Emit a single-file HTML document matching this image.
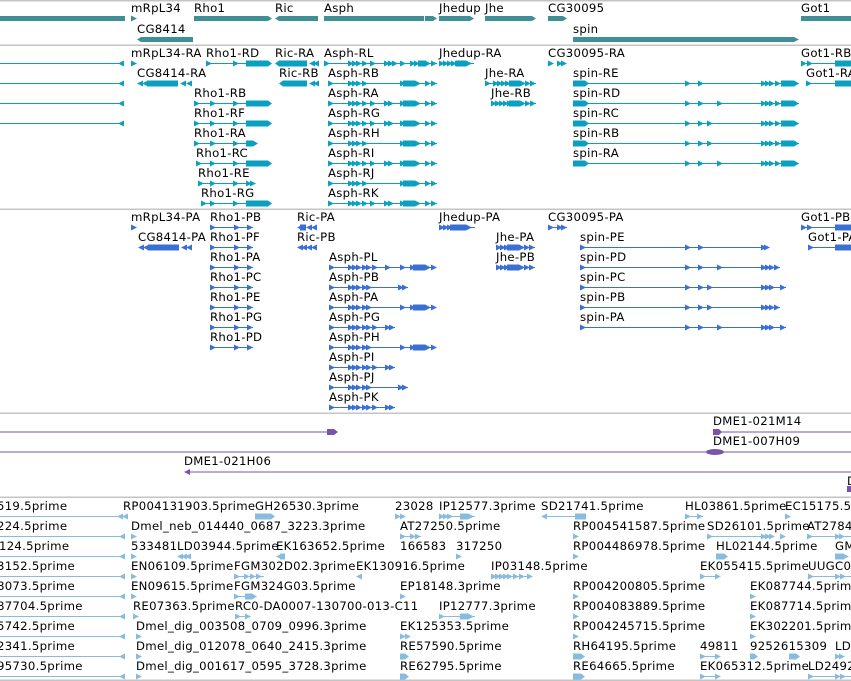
<!DOCTYPE html>
<html><head><meta charset="utf-8"><style>
html,body{margin:0;padding:0;background:#fff;width:851px;height:681px;overflow:hidden;position:relative}
.t{position:absolute;font-family:"DejaVu Sans","Liberation Sans",sans-serif;font-size:11.7px;line-height:14px;color:#000;white-space:nowrap;letter-spacing:0.28px}
svg{position:absolute;left:0;top:0}
</style></head><body>
<svg width="851" height="681" viewBox="0 0 851 681">
<defs>
<path id="r" d="M0,-3L6,0L0,3Z"/>
<path id="l" d="M6,-3L0,0L6,3Z"/>
</defs>
<g fill="#c4c4c4">
<rect x="0" y="0" width="851" height="1.5"/>
<rect x="0" y="44.5" width="851" height="1.5"/>
<rect x="0" y="208.5" width="851" height="1.5"/>
<rect x="0" y="412.5" width="851" height="1.5"/>
<rect x="0" y="496.5" width="851" height="1.5"/>
<rect x="0" y="679.5" width="851" height="1.5"/>
</g>
<g fill="#418f96">
<rect x="0" y="16" width="125" height="5"/>
<use href="#r" x="131" y="18.5"/>
<path d="M194,16H268L272,18.5L268,21H194Z"/>
<path d="M279,16H318V21H279L275,18.5Z"/>
<rect x="324" y="16" width="100" height="5"/>
<path d="M425,16H433L437,18.5L433,21H425Z"/>
<path d="M439,16H470L474,18.5L470,21H439Z"/>
<path d="M485,16H532L536,18.5L532,21H485Z"/>
<path d="M548,16H563L567,18.5L563,21H548Z"/>
<rect x="801" y="16" width="50" height="5"/>
<path d="M141,37H193V42H141L137,39.5Z"/>
<path d="M573,37H794L799,39.5L794,42H573Z"/>
</g>
<g fill="#0aa0c0" stroke="none">
<g transform="translate(0,63.5)">
<rect x="0" y="-0.5" width="120" height="1"/><use href="#l" x="118"/>
<use href="#r" x="131"/>
<rect x="206" y="-0.5" width="40" height="1"/><use href="#r" x="206"/><use href="#r" x="233"/><path d="M246,-3H268L272,0L268,3H246Z"/>
<path d="M279,-3H307V3H279L275,0Z"/><use href="#l" x="309"/><use href="#l" x="313"/>
<rect x="324" y="-0.5" width="113" height="1"/><use href="#r" x="324"/><use href="#r" x="348"/><use href="#r" x="352"/><use href="#r" x="356"/><use href="#r" x="362"/><use href="#r" x="370"/><use href="#r" x="384"/><use href="#r" x="388"/><use href="#r" x="392"/><use href="#r" x="400"/><use href="#r" x="410"/><use href="#r" x="414"/><rect x="418" y="-3" width="8" height="6"/><use href="#r" x="425"/><use href="#r" x="431"/>
<rect x="439" y="-0.5" width="35" height="1"/><use href="#r" x="439"/><use href="#r" x="443"/><use href="#r" x="447"/><use href="#r" x="451"/><use href="#r" x="455"/><rect x="456" y="-3" width="10" height="6"/><use href="#r" x="466"/>
<use href="#r" x="548"/><use href="#r" x="557"/><use href="#r" x="561"/>
<rect x="801" y="-0.5" width="50" height="1"/><use href="#r" x="801"/><use href="#r" x="807"/><rect x="835" y="-3" width="16" height="6"/>
</g>
<g transform="translate(0,83.5)">
<rect x="0" y="-0.5" width="120" height="1"/><use href="#l" x="118"/>
<use href="#l" x="137"/><use href="#l" x="142"/><path d="M147,-3H178V3H147Z"/><use href="#l" x="180"/><use href="#l" x="186"/>
<path d="M283,-3H307V3H283L279,0Z"/><use href="#l" x="309"/><use href="#l" x="313"/>
<rect x="328" y="-0.5" width="109" height="1"/><use href="#r" x="328"/><use href="#r" x="348"/><use href="#r" x="352"/><use href="#r" x="356"/><use href="#r" x="362"/><use href="#r" x="400"/><rect x="403" y="-3" width="12" height="6"/><use href="#r" x="415"/><use href="#r" x="425"/><use href="#r" x="431"/>
<rect x="485" y="-0.5" width="51" height="1"/><use href="#r" x="485"/><use href="#r" x="493"/><use href="#r" x="497"/><use href="#r" x="501"/><use href="#r" x="505"/><rect x="509" y="-3" width="11" height="6"/><use href="#r" x="520"/><use href="#r" x="525"/><use href="#r" x="530"/>
<rect x="573" y="-0.5" width="226" height="1"/><path d="M573,-3H585L589,0L585,3H573Z"/><use href="#r" x="685"/><use href="#r" x="698"/><use href="#r" x="761"/><use href="#r" x="765"/><use href="#r" x="769"/><use href="#r" x="775"/><path d="M781,-3H794L799,0L794,3H781Z"/>
<rect x="806" y="-0.5" width="45" height="1"/><use href="#r" x="806"/><rect x="835" y="-3" width="16" height="6"/>
</g>
<g transform="translate(0,103.5)">
<rect x="0" y="-0.5" width="120" height="1"/><use href="#l" x="118"/>
<rect x="194" y="-0.5" width="52" height="1"/><use href="#r" x="194"/><use href="#r" x="210"/><use href="#r" x="233"/><path d="M246,-3H268L272,0L268,3H246Z"/>
<rect x="328" y="-0.5" width="109" height="1"/><use href="#r" x="328"/><use href="#r" x="348"/><use href="#r" x="352"/><use href="#r" x="356"/><use href="#r" x="362"/><use href="#r" x="370"/><use href="#r" x="384"/><use href="#r" x="388"/><use href="#r" x="400"/><rect x="403" y="-3" width="12" height="6"/><use href="#r" x="415"/><use href="#r" x="425"/><use href="#r" x="431"/>
<use href="#r" x="491"/><use href="#r" x="495"/><use href="#r" x="499"/><use href="#r" x="503"/><use href="#r" x="507"/><rect x="509" y="-3" width="11" height="6"/><use href="#r" x="520"/><use href="#r" x="525"/><use href="#r" x="530"/><rect x="491" y="-0.5" width="45" height="1"/>
<rect x="573" y="-0.5" width="226" height="1"/><path d="M573,-3H585L589,0L585,3H573Z"/><use href="#r" x="685"/><use href="#r" x="698"/><use href="#r" x="717"/><use href="#r" x="761"/><use href="#r" x="765"/><use href="#r" x="769"/><use href="#r" x="775"/><path d="M781,-3H794L799,0L794,3H781Z"/>
</g>
<g transform="translate(0,123.5)">
<rect x="0" y="-0.5" width="120" height="1"/><use href="#l" x="118"/>
<rect x="194" y="-0.5" width="52" height="1"/><use href="#r" x="194"/><use href="#r" x="210"/><use href="#r" x="233"/><path d="M246,-3H268L272,0L268,3H246Z"/>
<rect x="328" y="-0.5" width="109" height="1"/><use href="#r" x="328"/><use href="#r" x="348"/><use href="#r" x="352"/><use href="#r" x="356"/><use href="#r" x="362"/><use href="#r" x="370"/><use href="#r" x="384"/><use href="#r" x="388"/><use href="#r" x="400"/><rect x="403" y="-3" width="12" height="6"/><use href="#r" x="415"/><use href="#r" x="425"/><use href="#r" x="431"/>
<rect x="573" y="-0.5" width="226" height="1"/><path d="M573,-3H585L589,0L585,3H573Z"/><use href="#r" x="685"/><use href="#r" x="698"/><use href="#r" x="707"/><use href="#r" x="761"/><use href="#r" x="765"/><use href="#r" x="769"/><use href="#r" x="775"/><path d="M781,-3H794L799,0L794,3H781Z"/>
</g>
<g transform="translate(0,143.5)">
<rect x="194" y="-0.5" width="52" height="1"/><use href="#r" x="194"/><use href="#r" x="210"/><use href="#r" x="233"/><path d="M246,-3H253L258,0L253,3H246Z"/>
<rect x="328" y="-0.5" width="109" height="1"/><use href="#r" x="328"/><use href="#r" x="348"/><use href="#r" x="352"/><use href="#r" x="356"/><use href="#r" x="362"/><use href="#r" x="400"/><rect x="403" y="-3" width="12" height="6"/><use href="#r" x="415"/><use href="#r" x="425"/><use href="#r" x="431"/>
<rect x="573" y="-0.5" width="226" height="1"/><path d="M573,-3H585L589,0L585,3H573Z"/><use href="#r" x="685"/><use href="#r" x="698"/><use href="#r" x="707"/><use href="#r" x="761"/><use href="#r" x="765"/><use href="#r" x="769"/><use href="#r" x="775"/><path d="M781,-3H794L799,0L794,3H781Z"/>
</g>
<g transform="translate(0,163.5)">
<rect x="196" y="-0.5" width="50" height="1"/><use href="#r" x="196"/><use href="#r" x="210"/><use href="#r" x="233"/><path d="M246,-3H268L272,0L268,3H246Z"/>
<rect x="328" y="-0.5" width="109" height="1"/><use href="#r" x="328"/><use href="#r" x="348"/><use href="#r" x="352"/><use href="#r" x="356"/><use href="#r" x="362"/><use href="#r" x="370"/><use href="#r" x="384"/><use href="#r" x="388"/><use href="#r" x="400"/><rect x="403" y="-3" width="12" height="6"/><use href="#r" x="415"/><use href="#r" x="425"/><use href="#r" x="431"/>
<rect x="573" y="-0.5" width="226" height="1"/><path d="M573,-3H585L589,0L585,3H573Z"/><use href="#r" x="685"/><use href="#r" x="698"/><use href="#r" x="717"/><use href="#r" x="761"/><use href="#r" x="765"/><use href="#r" x="769"/><use href="#r" x="775"/><path d="M781,-3H794L799,0L794,3H781Z"/>
</g>
<g transform="translate(0,183.5)">
<rect x="198" y="-0.5" width="50" height="1"/><use href="#r" x="198"/><use href="#r" x="210"/><use href="#r" x="233"/><use href="#r" x="246"/><use href="#r" x="250"/>
<rect x="328" y="-0.5" width="109" height="1"/><use href="#r" x="328"/><use href="#r" x="348"/><use href="#r" x="352"/><use href="#r" x="356"/><use href="#r" x="362"/><use href="#r" x="400"/><rect x="403" y="-3" width="12" height="6"/><use href="#r" x="415"/><use href="#r" x="425"/><use href="#r" x="431"/>
</g>
<g transform="translate(0,203.5)">
<rect x="201" y="-0.5" width="45" height="1"/><use href="#r" x="201"/><use href="#r" x="210"/><use href="#r" x="233"/><path d="M246,-3H268L272,0L268,3H246Z"/>
<rect x="328" y="-0.5" width="109" height="1"/><use href="#r" x="328"/><use href="#r" x="348"/><use href="#r" x="352"/><use href="#r" x="356"/><use href="#r" x="362"/><use href="#r" x="370"/><use href="#r" x="384"/><use href="#r" x="388"/><use href="#r" x="400"/><rect x="403" y="-3" width="12" height="6"/><use href="#r" x="415"/><use href="#r" x="425"/><use href="#r" x="431"/>
</g>
</g>
<g fill="#3a6fd4">
<g transform="translate(0,227.5)">
<use href="#r" x="131"/>
<rect x="210" y="-0.5" width="43" height="1"/><use href="#r" x="210"/><use href="#r" x="234"/><use href="#r" x="247"/>
<use href="#l" x="297"/><rect x="300" y="-3" width="6" height="6"/><use href="#l" x="306"/><use href="#l" x="311"/>
<rect x="439" y="-0.5" width="36" height="1"/><use href="#r" x="439"/><use href="#r" x="443"/><use href="#r" x="447"/><rect x="450" y="-3" width="16" height="6"/><use href="#r" x="466"/>
<rect x="548" y="-0.5" width="19" height="1"/><use href="#r" x="548"/><use href="#r" x="557"/><use href="#r" x="561"/>
<rect x="801" y="-0.5" width="50" height="1"/><use href="#r" x="801"/><use href="#r" x="807"/><rect x="835" y="-3" width="16" height="6"/>
</g>
<g transform="translate(0,247.5)">
<use href="#l" x="138"/><use href="#l" x="143"/><path d="M148,-3H179V3H148Z"/><use href="#l" x="181"/><use href="#l" x="186"/>
<rect x="210" y="-0.5" width="43" height="1"/><use href="#r" x="210"/><use href="#r" x="234"/><use href="#r" x="247"/>
<use href="#l" x="297"/><use href="#l" x="301"/><use href="#l" x="306"/><use href="#l" x="311"/>
<rect x="496" y="-0.5" width="39" height="1"/><use href="#r" x="496"/><use href="#r" x="500"/><use href="#r" x="504"/><rect x="507" y="-3" width="12" height="6"/><use href="#r" x="519"/><use href="#r" x="524"/><use href="#r" x="529"/>
<rect x="580" y="-0.5" width="188" height="1"/><use href="#r" x="580"/><use href="#r" x="685"/><use href="#r" x="698"/><use href="#r" x="761"/><use href="#r" x="764"/>
<rect x="808" y="-0.5" width="43" height="1"/><use href="#r" x="808"/><rect x="835" y="-3" width="16" height="6"/>
</g>
<g transform="translate(0,267.5)">
<rect x="210" y="-0.5" width="43" height="1"/><use href="#r" x="210"/><use href="#r" x="234"/><use href="#r" x="247"/>
<rect x="329" y="-0.5" width="107" height="1"/><use href="#r" x="329"/><use href="#r" x="348"/><use href="#r" x="352"/><use href="#r" x="356"/><use href="#r" x="362"/><use href="#r" x="366"/><use href="#r" x="372"/><use href="#r" x="385"/><use href="#r" x="400"/><use href="#r" x="410"/><rect x="413" y="-3" width="12" height="6"/><use href="#r" x="425"/><use href="#r" x="431"/>
<rect x="496" y="-0.5" width="39" height="1"/><use href="#r" x="496"/><use href="#r" x="500"/><use href="#r" x="504"/><rect x="507" y="-3" width="12" height="6"/><use href="#r" x="519"/><use href="#r" x="524"/><use href="#r" x="529"/>
<rect x="580" y="-0.5" width="200" height="1"/><use href="#r" x="580"/><use href="#r" x="685"/><use href="#r" x="698"/><use href="#r" x="717"/><use href="#r" x="761"/><use href="#r" x="765"/><use href="#r" x="769"/><use href="#r" x="774"/>
</g>
<g transform="translate(0,287.5)">
<rect x="210" y="-0.5" width="43" height="1"/><use href="#r" x="210"/><use href="#r" x="234"/><use href="#r" x="247"/>
<rect x="329" y="-0.5" width="79" height="1"/><use href="#r" x="329"/><use href="#r" x="348"/><use href="#r" x="352"/><use href="#r" x="356"/><use href="#r" x="362"/><use href="#r" x="366"/><use href="#r" x="398"/><use href="#r" x="402"/>
<rect x="580" y="-0.5" width="206" height="1"/><use href="#r" x="580"/><use href="#r" x="685"/><use href="#r" x="698"/><use href="#r" x="707"/><use href="#r" x="761"/><use href="#r" x="765"/><use href="#r" x="769"/><use href="#r" x="780"/>
</g>
<g transform="translate(0,307.5)">
<rect x="210" y="-0.5" width="43" height="1"/><use href="#r" x="210"/><use href="#r" x="234"/><use href="#r" x="247"/>
<rect x="329" y="-0.5" width="107" height="1"/><use href="#r" x="329"/><use href="#r" x="348"/><use href="#r" x="352"/><use href="#r" x="356"/><use href="#r" x="362"/><use href="#r" x="366"/><use href="#r" x="400"/><use href="#r" x="410"/><rect x="413" y="-3" width="12" height="6"/><use href="#r" x="425"/><use href="#r" x="431"/>
<rect x="580" y="-0.5" width="200" height="1"/><use href="#r" x="580"/><use href="#r" x="685"/><use href="#r" x="698"/><use href="#r" x="707"/><use href="#r" x="761"/><use href="#r" x="765"/><use href="#r" x="769"/><use href="#r" x="774"/>
</g>
<g transform="translate(0,327.5)">
<rect x="210" y="-0.5" width="43" height="1"/><use href="#r" x="210"/><use href="#r" x="234"/><use href="#r" x="247"/>
<rect x="329" y="-0.5" width="66" height="1"/><use href="#r" x="329"/><use href="#r" x="348"/><use href="#r" x="352"/><use href="#r" x="356"/><use href="#r" x="362"/><use href="#r" x="366"/><use href="#r" x="372"/><use href="#r" x="385"/><use href="#r" x="389"/>
<rect x="580" y="-0.5" width="206" height="1"/><use href="#r" x="580"/><use href="#r" x="685"/><use href="#r" x="698"/><use href="#r" x="717"/><use href="#r" x="761"/><use href="#r" x="765"/><use href="#r" x="769"/><use href="#r" x="780"/>
</g>
<g transform="translate(0,347.5)">
<rect x="210" y="-0.5" width="43" height="1"/><use href="#r" x="210"/><use href="#r" x="234"/><use href="#r" x="247"/>
<rect x="329" y="-0.5" width="107" height="1"/><use href="#r" x="329"/><use href="#r" x="348"/><use href="#r" x="352"/><use href="#r" x="356"/><use href="#r" x="362"/><use href="#r" x="366"/><use href="#r" x="400"/><use href="#r" x="410"/><rect x="413" y="-3" width="12" height="6"/><use href="#r" x="425"/><use href="#r" x="431"/>
</g>
<g transform="translate(0,367.5)">
<rect x="329" y="-0.5" width="66" height="1"/><use href="#r" x="329"/><use href="#r" x="348"/><use href="#r" x="352"/><use href="#r" x="356"/><use href="#r" x="362"/><use href="#r" x="366"/><use href="#r" x="372"/><use href="#r" x="385"/><use href="#r" x="389"/>
</g>
<g transform="translate(0,387.5)">
<rect x="329" y="-0.5" width="79" height="1"/><use href="#r" x="329"/><use href="#r" x="348"/><use href="#r" x="352"/><use href="#r" x="356"/><use href="#r" x="362"/><use href="#r" x="366"/><use href="#r" x="398"/><use href="#r" x="402"/>
</g>
<g transform="translate(0,407.5)">
<rect x="329" y="-0.5" width="66" height="1"/><use href="#r" x="329"/><use href="#r" x="348"/><use href="#r" x="352"/><use href="#r" x="356"/><use href="#r" x="362"/><use href="#r" x="366"/><use href="#r" x="372"/><use href="#r" x="385"/><use href="#r" x="389"/>
</g>
</g>
<g fill="#7755aa">
<rect x="0" y="431.5" width="330" height="1"/><path d="M327,429H334L338,432L334,435H327Z"/>
<rect x="713" y="431.5" width="138" height="1"/><path d="M713,429H719L722,432L719,435H713Z"/>
<rect x="0" y="451.5" width="851" height="1"/><ellipse cx="715" cy="452" rx="9" ry="3"/>
<rect x="186" y="471.5" width="665" height="1"/><use href="#l" x="184" y="472"/>
<rect x="847" y="486" width="4" height="6"/>
</g>
<g fill="#88bbe0">
<g transform="translate(0,516.5)">
<rect x="0" y="-0.5" width="120" height="1"/><use href="#l" x="117"/><use href="#l" x="122"/>
<path d="M255,-3H271L275,0L271,3H255Z"/>
<use href="#r" x="395"/><use href="#r" x="400"/>
<rect x="439" y="-0.5" width="36" height="1"/><use href="#r" x="439"/><use href="#r" x="443"/><use href="#r" x="447"/><rect x="460" y="-3" width="8" height="6"/><use href="#r" x="468"/>
<rect x="545" y="-0.5" width="30" height="1"/><use href="#l" x="541"/><rect x="575" y="-3" width="11" height="6"/>
<rect x="685" y="-0.5" width="18" height="1"/><use href="#r" x="685"/><use href="#r" x="697"/>
<use href="#r" x="785"/>
</g>
<g transform="translate(0,536.5)">
<rect x="0" y="-0.5" width="120" height="1"/><use href="#l" x="119"/>
<use href="#r" x="131"/>
<rect x="400" y="-0.5" width="21" height="1"/><use href="#r" x="400"/><use href="#r" x="410"/><use href="#r" x="415"/>
<use href="#r" x="573"/>
<rect x="707" y="-0.5" width="55" height="1"/><use href="#r" x="707"/><use href="#r" x="761"/><use href="#r" x="765"/><use href="#r" x="769"/><use href="#r" x="780"/>
<rect x="807" y="-0.5" width="44" height="1"/><use href="#r" x="807"/><use href="#r" x="835"/><use href="#r" x="839"/>
</g>
<g transform="translate(0,556.5)">
<rect x="0" y="-0.5" width="120" height="1"/><use href="#l" x="119"/>
<use href="#r" x="131"/>
<use href="#l" x="177"/><use href="#l" x="181"/><use href="#l" x="185"/>
<use href="#l" x="276"/><rect x="280" y="-3" width="5" height="6"/>
<use href="#r" x="456"/>
<use href="#r" x="573"/>
<path d="M716,-3H724L728,0L724,3H716Z"/>
<use href="#r" x="835"/><rect x="835" y="-3" width="9" height="6"/><use href="#r" x="843"/>
</g>
<g transform="translate(0,576.5)">
<rect x="0" y="-0.5" width="120" height="1"/><use href="#l" x="119"/>
<use href="#r" x="131"/>
<rect x="234" y="-0.5" width="30" height="1"/><use href="#r" x="234"/><use href="#r" x="244"/><use href="#r" x="250"/><use href="#r" x="256"/>
<use href="#l" x="356"/>
<use href="#r" x="491"/><use href="#r" x="495"/><use href="#r" x="499"/><use href="#r" x="503"/><use href="#r" x="507"/><use href="#r" x="513"/><use href="#r" x="519"/><use href="#r" x="527"/><rect x="491" y="-0.5" width="40" height="1"/>
<rect x="700" y="-0.5" width="20" height="1"/><use href="#r" x="700"/><use href="#r" x="715"/>
<rect x="808" y="-0.5" width="43" height="1"/><use href="#r" x="808"/><use href="#r" x="835"/><use href="#r" x="840"/>
</g>
<g transform="translate(0,596.5)">
<rect x="0" y="-0.5" width="120" height="1"/><use href="#l" x="119"/>
<use href="#r" x="131"/>
<rect x="234" y="-0.5" width="20" height="1"/><use href="#r" x="234"/><path d="M245,-3H252L257,0L252,3H245Z"/>
<use href="#r" x="400"/>
<use href="#r" x="573"/>
<use href="#r" x="750"/>
</g>
<g transform="translate(0,616.5)">
<rect x="0" y="-0.5" width="120" height="1"/><use href="#l" x="119"/>
<use href="#r" x="133"/>
<use href="#r" x="235"/><use href="#r" x="245"/><rect x="235" y="-0.5" width="12" height="1"/>
<rect x="439" y="-0.5" width="36" height="1"/><use href="#r" x="439"/><rect x="460" y="-3" width="8" height="6"/><use href="#r" x="468"/>
<use href="#r" x="573"/>
<use href="#r" x="750"/>
</g>
<g transform="translate(0,636.5)">
<rect x="0" y="-0.5" width="120" height="1"/><use href="#l" x="119"/>
<use href="#r" x="136"/>
<use href="#r" x="400"/><use href="#r" x="405"/>
<use href="#r" x="573"/>
<use href="#r" x="750"/>
</g>
<g transform="translate(0,656.5)">
<rect x="0" y="-0.5" width="120" height="1"/><use href="#l" x="119"/>
<use href="#r" x="136"/>
<path d="M400,-3H405L409,0L405,3H400Z"/>
<path d="M573,-3H581L585,0L581,3H573Z"/>
<rect x="700" y="-0.5" width="20" height="1"/><use href="#r" x="700"/><use href="#r" x="715"/>
<path d="M750,-3H754L758,0L754,3H750Z"/>
<path d="M789,-3H796L800,0L796,3H789Z"/>
<use href="#r" x="835"/><use href="#r" x="839"/>
</g>
<g transform="translate(0,676.5)">
<rect x="0" y="-0.5" width="120" height="1"/><use href="#l" x="119"/>
<use href="#r" x="136"/>
<path d="M400,-3H405L409,0L405,3H400Z"/>
<path d="M573,-3H581L585,0L581,3H573Z"/>
<rect x="700" y="-0.5" width="20" height="1"/><use href="#r" x="700"/><use href="#r" x="715"/>
<rect x="808" y="-0.5" width="43" height="1"/><use href="#r" x="808"/><use href="#r" x="835"/><use href="#r" x="840"/>
</g>
</g>
</svg>

<div class="t" style="left:131px;top:1px">mRpL34</div>
<div class="t" style="left:194px;top:1px">Rho1</div>
<div class="t" style="left:275px;top:1px">Ric</div>
<div class="t" style="left:324px;top:1px">Asph</div>
<div class="t" style="left:439px;top:1px">Jhedup</div>
<div class="t" style="left:485px;top:1px">Jhe</div>
<div class="t" style="left:548px;top:1px">CG30095</div>
<div class="t" style="left:801px;top:1px">Got1</div>
<div class="t" style="left:137px;top:22px">CG8414</div>
<div class="t" style="left:573px;top:22px">spin</div>

<div class="t" style="left:131px;top:46px">mRpL34-RA</div>
<div class="t" style="left:206px;top:46px">Rho1-RD</div>
<div class="t" style="left:275px;top:46px">Ric-RA</div>
<div class="t" style="left:324px;top:46px">Asph-RL</div>
<div class="t" style="left:439px;top:46px">Jhedup-RA</div>
<div class="t" style="left:548px;top:46px">CG30095-RA</div>
<div class="t" style="left:801px;top:46px">Got1-RB</div>
<div class="t" style="left:137px;top:66px">CG8414-RA</div>
<div class="t" style="left:279px;top:66px">Ric-RB</div>
<div class="t" style="left:328px;top:66px">Asph-RB</div>
<div class="t" style="left:485px;top:66px">Jhe-RA</div>
<div class="t" style="left:573px;top:66px">spin-RE</div>
<div class="t" style="left:806px;top:66px">Got1-RA</div>
<div class="t" style="left:194px;top:86px">Rho1-RB</div>
<div class="t" style="left:328px;top:86px">Asph-RA</div>
<div class="t" style="left:491px;top:86px">Jhe-RB</div>
<div class="t" style="left:573px;top:86px">spin-RD</div>
<div class="t" style="left:194px;top:106px">Rho1-RF</div>
<div class="t" style="left:328px;top:106px">Asph-RG</div>
<div class="t" style="left:573px;top:106px">spin-RC</div>
<div class="t" style="left:194px;top:126px">Rho1-RA</div>
<div class="t" style="left:328px;top:126px">Asph-RH</div>
<div class="t" style="left:573px;top:126px">spin-RB</div>
<div class="t" style="left:196px;top:146px">Rho1-RC</div>
<div class="t" style="left:328px;top:146px">Asph-RI</div>
<div class="t" style="left:573px;top:146px">spin-RA</div>
<div class="t" style="left:198px;top:166px">Rho1-RE</div>
<div class="t" style="left:328px;top:166px">Asph-RJ</div>
<div class="t" style="left:201px;top:186px">Rho1-RG</div>
<div class="t" style="left:328px;top:186px">Asph-RK</div>

<div class="t" style="left:131px;top:210px">mRpL34-PA</div>
<div class="t" style="left:210px;top:210px">Rho1-PB</div>
<div class="t" style="left:297px;top:210px">Ric-PA</div>
<div class="t" style="left:439px;top:210px">Jhedup-PA</div>
<div class="t" style="left:548px;top:210px">CG30095-PA</div>
<div class="t" style="left:801px;top:210px">Got1-PB</div>
<div class="t" style="left:138px;top:230px">CG8414-PA</div>
<div class="t" style="left:210px;top:230px;background:#fff">Rho1-PF</div>
<div class="t" style="left:297px;top:230px">Ric-PB</div>
<div class="t" style="left:496px;top:230px">Jhe-PA</div>
<div class="t" style="left:580px;top:230px">spin-PE</div>
<div class="t" style="left:808px;top:230px">Got1-PA</div>
<div class="t" style="left:210px;top:250px">Rho1-PA</div>
<div class="t" style="left:329px;top:250px">Asph-PL</div>
<div class="t" style="left:496px;top:250px">Jhe-PB</div>
<div class="t" style="left:580px;top:250px">spin-PD</div>
<div class="t" style="left:210px;top:270px">Rho1-PC</div>
<div class="t" style="left:329px;top:270px">Asph-PB</div>
<div class="t" style="left:580px;top:270px">spin-PC</div>
<div class="t" style="left:210px;top:290px">Rho1-PE</div>
<div class="t" style="left:329px;top:290px">Asph-PA</div>
<div class="t" style="left:580px;top:290px">spin-PB</div>
<div class="t" style="left:210px;top:310px">Rho1-PG</div>
<div class="t" style="left:329px;top:310px">Asph-PG</div>
<div class="t" style="left:580px;top:310px">spin-PA</div>
<div class="t" style="left:210px;top:330px">Rho1-PD</div>
<div class="t" style="left:329px;top:330px">Asph-PH</div>
<div class="t" style="left:329px;top:350px">Asph-PI</div>
<div class="t" style="left:329px;top:370px">Asph-PJ</div>
<div class="t" style="left:329px;top:390px">Asph-PK</div>

<div class="t" style="left:713px;top:414px">DME1-021M14</div>
<div class="t" style="left:713px;top:434px">DME1-007H09</div>
<div class="t" style="left:184px;top:454px">DME1-021H06</div>
<div class="t" style="left:847px;top:474px">D</div>

<div class="t" style="left:-3px;top:499px">519.5prime</div>
<div class="t" style="left:123px;top:499px">RP004131903.5prime</div>
<div class="t" style="left:255px;top:499px">GH26530.3prime</div>
<div class="t" style="left:395px;top:499px">23028</div>
<div class="t" style="left:439px;top:499px">IP12577.3prime</div>
<div class="t" style="left:541px;top:499px">SD21741.5prime</div>
<div class="t" style="left:685px;top:499px">HL03861.5prime</div>
<div class="t" style="left:785px;top:499px">EC15175.5prime</div>

<div class="t" style="left:-3px;top:519px">224.5prime</div>
<div class="t" style="left:131px;top:519px">Dmel_neb_014440_0687_3223.3prime</div>
<div class="t" style="left:400px;top:519px">AT27250.5prime</div>
<div class="t" style="left:573px;top:519px">RP004541587.5prime</div>
<div class="t" style="left:707px;top:519px">SD26101.5prime</div>
<div class="t" style="left:807px;top:519px">AT27840</div>

<div class="t" style="left:-1px;top:539px">124.5prime</div>
<div class="t" style="left:131px;top:539px">533481</div>
<div class="t" style="left:177px;top:539px">LD03944.5prime</div>
<div class="t" style="left:276px;top:539px">EK163652.5prime</div>
<div class="t" style="left:400px;top:539px">166583</div>
<div class="t" style="left:456px;top:539px">317250</div>
<div class="t" style="left:573px;top:539px">RP004486978.5prime</div>
<div class="t" style="left:716px;top:539px">HL02144.5prime</div>
<div class="t" style="left:835px;top:539px">GM</div>

<div class="t" style="left:-3px;top:559px">3152.5prime</div>
<div class="t" style="left:131px;top:559px">EN06109.5prime</div>
<div class="t" style="left:234px;top:559px">FGM302D02.3prime</div>
<div class="t" style="left:356px;top:559px">EK130916.5prime</div>
<div class="t" style="left:491px;top:559px">IP03148.5prime</div>
<div class="t" style="left:700px;top:559px">EK055415.5prime</div>
<div class="t" style="left:808px;top:559px">UUGC02</div>

<div class="t" style="left:-3px;top:579px">8073.5prime</div>
<div class="t" style="left:131px;top:579px">EN09615.5prime</div>
<div class="t" style="left:234px;top:579px">FGM324G03.5prime</div>
<div class="t" style="left:400px;top:579px">EP18148.3prime</div>
<div class="t" style="left:573px;top:579px">RP004200805.5prime</div>
<div class="t" style="left:750px;top:579px">EK087744.5prime</div>

<div class="t" style="left:-3px;top:599px">87704.5prime</div>
<div class="t" style="left:133px;top:599px">RE07363.5prime</div>
<div class="t" style="left:235px;top:599px">RC0-DA0007-130700-013-C11</div>
<div class="t" style="left:439px;top:599px">IP12777.3prime</div>
<div class="t" style="left:573px;top:599px">RP004083889.5prime</div>
<div class="t" style="left:750px;top:599px">EK087714.5prime</div>

<div class="t" style="left:-3px;top:619px">5742.5prime</div>
<div class="t" style="left:136px;top:619px">Dmel_dig_003508_0709_0996.3prime</div>
<div class="t" style="left:400px;top:619px">EK125353.5prime</div>
<div class="t" style="left:573px;top:619px">RP004245715.5prime</div>
<div class="t" style="left:750px;top:619px">EK302201.5prime</div>

<div class="t" style="left:-3px;top:639px">2341.5prime</div>
<div class="t" style="left:136px;top:639px">Dmel_dig_012078_0640_2415.3prime</div>
<div class="t" style="left:400px;top:639px">RE57590.5prime</div>
<div class="t" style="left:573px;top:639px">RH64195.5prime</div>
<div class="t" style="left:700px;top:639px">49811</div>
<div class="t" style="left:750px;top:639px">9252615309</div>
<div class="t" style="left:835px;top:639px">LD</div>

<div class="t" style="left:-3px;top:659px">95730.5prime</div>
<div class="t" style="left:136px;top:659px">Dmel_dig_001617_0595_3728.3prime</div>
<div class="t" style="left:400px;top:659px">RE62795.5prime</div>
<div class="t" style="left:573px;top:659px">RE64665.5prime</div>
<div class="t" style="left:700px;top:659px">EK065312.5prime</div>
<div class="t" style="left:808px;top:659px">LD2492</div>
</body></html>
